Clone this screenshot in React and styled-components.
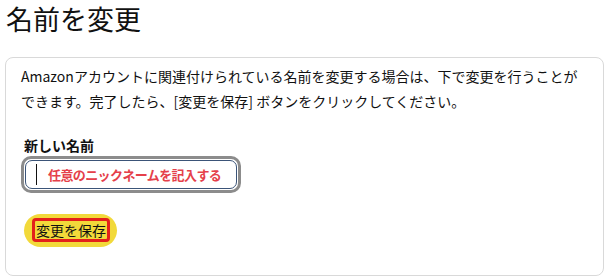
import React from "react";
import styled, { createGlobalStyle } from "styled-components";

const GlobalStyle = createGlobalStyle`
  body {
    margin: 0;
    background: #fff;
    font-family: "Noto Sans CJK JP", "Liberation Sans", sans-serif;
    color: #111;
  }
`;

const Page = styled.main`
  width: 608px;
  padding: 0 4px 0 5px;
  box-sizing: border-box;
`;

const Title = styled.h1`
  margin: 0;
  padding-left: 1px;
  font-size: 27px;
  font-weight: 400;
  line-height: 37px;
  color: #111;
`;

const Card = styled.section`
  margin-top: 20px;
  border: 1px solid #d9d9d9;
  border-radius: 8px;
  padding: 6px 16px 28px 15px;
`;

const Intro = styled.p`
  margin: 0;
  font-size: 14px;
  line-height: 25px;
  color: #111;
`;

const Field = styled.div`
  margin-top: 21px;
  display: flex;
  flex-direction: column;
  align-items: flex-start;
`;

const Label = styled.label`
  padding-left: 3px;
  font-size: 14px;
  font-weight: 700;
  line-height: 20px;
`;

const InputRing = styled.div`
  margin-top: 1px;
  width: 220px;
  box-sizing: border-box;
  border: 3px solid #8c8c8c;
  border-radius: 10px;
  padding: 1px;
  background: #fff;
`;

const InputBox = styled.div`
  height: 27px;
  border: 1px solid #3b5478;
  border-radius: 7px;
  display: flex;
  align-items: center;
  padding-left: 10px;
  gap: 11px;
`;

const Caret = styled.span`
  width: 1px;
  height: 21px;
  background: #111;
`;

const Hint = styled.span`
  font-size: 13px;
  font-weight: 700;
  letter-spacing: -0.6px;
  color: #e5404a;
`;

const SaveButton = styled.button`
  margin-top: 21px;
  margin-left: 3px;
  background: #f2d93a;
  border: none;
  border-radius: 17px;
  padding: 4px 7px 5px 8px;
  cursor: pointer;
  font-family: inherit;
  display: block;
`;

const SaveLabel = styled.span`
  display: block;
  border: 3px solid #e3201b;
  border-radius: 4px;
  padding: 0 1px;
  font-size: 14px;
  line-height: 18px;
  color: #111;
`;

export default function App() {
  return (
    <>
      <GlobalStyle />
      <Page>
        <Title>名前を変更</Title>
        <Card>
          <Intro>
            Amazonアカウントに関連付けられている名前を変更する場合は、下で変更を行うことができます。完了したら、[変更を保存] ボタンをクリックしてください。
          </Intro>
          <Field>
            <Label>新しい名前</Label>
            <InputRing>
              <InputBox>
                <Caret />
                <Hint>任意のニックネームを記入する</Hint>
              </InputBox>
            </InputRing>
          </Field>
          <SaveButton>
            <SaveLabel>変更を保存</SaveLabel>
          </SaveButton>
        </Card>
      </Page>
    </>
  );
}
